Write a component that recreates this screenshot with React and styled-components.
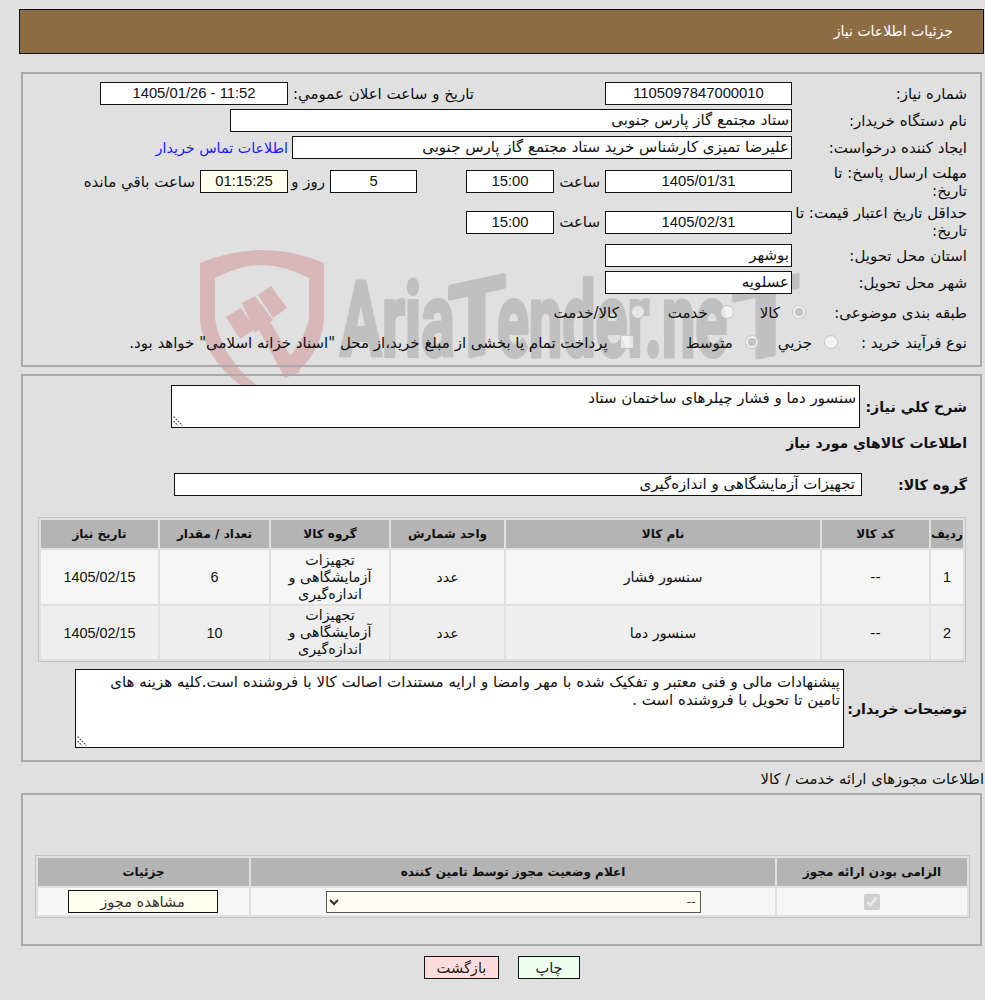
import React from "react";
import styled, { createGlobalStyle } from "styled-components";

const arabic = '"DejaVu Sans", sans-serif';
const latin = '"Liberation Sans", "DejaVu Sans", sans-serif';

const GlobalStyle = createGlobalStyle`
  html {
    background: #e0e0e0;
  }
  body {
    margin: 0;
    font-family: ${arabic};
    font-size: 15px;
    color: #111;
  }
`;

const Watermark = () => {
  return (
    <MarkLayer viewBox="0 0 620 150" aria-hidden="true">
      <path
        d="M0 13 Q32 0 62 0 Q94 0 124 13 L124 70 Q120 105 93 125 L86 110 Q104 92 109 68 L109 28 Q84 15 62 15 Q40 15 15 28 L15 68 Q20 105 56 135 L40 135 Q2 105 0 68 Z"
        fill="#d8b7b9"
      />
      <g fill="#d8b7b9">
        <polygon points="26,67 41,58 55,79 40,89" />
        <polygon points="42,53 55,46 73,70 55,83" />
        <polygon points="58,45 71,36 87,58 73,68" />
        <polygon points="58,78 69,70 100,122 85,128" />
      </g>
      <MarkText transform="translate(140,106) scale(.6,1)">Aria</MarkText>
      <MarkText transform="translate(248,111) skewY(-12) scale(.9,1)">T</MarkText>
      <MarkText transform="translate(297,106) scale(.57,1)">ender.ne</MarkText>
      <MarkText transform="translate(532,113) skewY(-12) scale(1.05,1)">T</MarkText>
    </MarkLayer>
  );
};

const NoteBox = ({ w, h, value }) => {
  return (
    <NoteWrap $w={w} $h={h}>
      <Note readOnly value={value} />
      <Grip viewBox="0 0 10 10" aria-hidden="true">
        <path d="M0.5 0.5 L9.5 9.5 M0.5 5 L5 9.5" />
      </Grip>
    </NoteWrap>
  );
};

const App = () => {
  return (
    <Page>
      <GlobalStyle />
      <Watermark />
      <TitleBar>جزئیات اطلاعات نیاز</TitleBar>

      <InfoPanel>
        <Row $height={27}>
          <Label>شماره نیاز:</Label>
          <Field $w={187} $num>1105097847000010</Field>
          <Spacer $w={123} />
          <InlineText $w={194} $pad={8}>تاریخ و ساعت اعلان عمومي:</InlineText>
          <Field $w={188} $num>1405/01/26 - 11:52</Field>
        </Row>
        <Row $height={27}>
          <Label>نام دستگاه خریدار:</Label>
          <Field $w={562}>ستاد مجتمع گاز پارس جنوبی</Field>
        </Row>
        <Row $height={27}>
          <Label>ایجاد کننده درخواست:</Label>
          <Field $w={500}>علیرضا تمیزی کارشناس خرید ستاد مجتمع گاز پارس جنوبی</Field>
          <ContactLink href="#">اطلاعات تماس خریدار</ContactLink>
        </Row>
        <Row $height={41}>
          <Label>مهلت ارسال پاسخ: تا<br />تاریخ:</Label>
          <Field $w={187} $num>1405/01/31</Field>
          <InlineText $w={51} $pad={5}>ساعت</InlineText>
          <Field $w={88} $num>15:00</Field>
          <Spacer $w={49} />
          <Field $w={87} $num>5</Field>
          <InlineText $w={42} $pad={5}>روز و</InlineText>
          <Field $w={88} $num $tint>01:15:25</Field>
          <InlineText $pad={5}>ساعت باقي مانده</InlineText>
        </Row>
        <Row $height={40}>
          <Label>حداقل تاریخ اعتبار قیمت: تا<br />تاریخ:</Label>
          <Field $w={187} $num>1405/02/31</Field>
          <InlineText $w={51} $pad={5}>ساعت</InlineText>
          <Field $w={88} $num>15:00</Field>
        </Row>
        <Row $height={27}>
          <Label>استان محل تحویل:</Label>
          <Field $w={187}>بوشهر</Field>
        </Row>
        <Row $height={27}>
          <Label>شهر محل تحویل:</Label>
          <Field $w={187}>عسلویه</Field>
        </Row>
        <Row $height={33}>
          <Label $w={161}>طبقه بندی موضوعی:</Label>
          <Option $gap={26}><Radio checked readOnly disabled name="kind" />کالا</Option>
          <Option $gap={23}><Radio readOnly disabled name="kind" />خدمت</Option>
          <Option><Radio readOnly disabled name="kind" />کالا/خدمت</Option>
        </Row>
        <Row $height={27}>
          <Label $w={129}>نوع فرآیند خرید :</Label>
          <Option $gap={19}><Radio readOnly disabled name="proc" />جزيي</Option>
          <Option $gap={52}><Radio checked readOnly disabled name="proc" />متوسط</Option>
          <Option><Tick readOnly disabled />پرداخت تمام یا بخشی از مبلغ خرید،از محل "اسناد خزانه اسلامی" خواهد بود.</Option>
        </Row>
      </InfoPanel>

      <GoodsPanel>
        <Row $height={43}>
          <BoldLabel $w={107}>شرح کلي نیاز:</BoldLabel>
          <NoteBox w={689} h={43} value="سنسور دما و فشار چیلرهای ساختمان ستاد" />
        </Row>
        <SectionTitle>اطلاعات کالاهاي مورد نیاز</SectionTitle>
        <Row $height={23}>
          <BoldLabel $w={105}>گروه کالا:</BoldLabel>
          <Field $w={688} $pad={6}>تجهیزات آزمایشگاهی و اندازه‌گیری</Field>
        </Row>

        <GoodsTable>
          <colgroup>
            <col width="32" />
            <col width="107" />
            <col width="314" />
            <col width="113" />
            <col width="118" />
            <col width="109" />
            <col width="117" />
          </colgroup>
          <thead>
            <tr>
              <Th>ردیف</Th>
              <Th>کد کالا</Th>
              <Th>نام کالا</Th>
              <Th>واحد شمارش</Th>
              <Th>گروه کالا</Th>
              <Th>تعداد / مقدار</Th>
              <Th>تاریخ نیاز</Th>
            </tr>
          </thead>
          <tbody>
            <tr>
              <Td $num>1</Td>
              <Td>--</Td>
              <Td>سنسور فشار</Td>
              <Td>عدد</Td>
              <GroupCell>تجهیزات آزمایشگاهی و اندازه‌گیری</GroupCell>
              <Td $num>6</Td>
              <Td $num>1405/02/15</Td>
            </tr>
            <tr>
              <Td $num $alt>2</Td>
              <Td $alt>--</Td>
              <Td $alt>سنسور دما</Td>
              <Td $alt>عدد</Td>
              <GroupCell $alt>تجهیزات آزمایشگاهی و اندازه‌گیری</GroupCell>
              <Td $num $alt>10</Td>
              <Td $num $alt>1405/02/15</Td>
            </tr>
          </tbody>
        </GoodsTable>

        <BuyerRow>
          <BoldLabel $w={123}>توضیحات خریدار:</BoldLabel>
          <NoteBox
            w={769}
            h={79}
            value={"پیشنهادات مالی و فنی معتبر و تفکیک شده با مهر وامضا و ارایه مستندات اصالت کالا با فروشنده است.کلیه هزینه های\nتامین تا تحویل با فروشنده است ."}
          />
        </BuyerRow>
      </GoodsPanel>

      <PermitHeading>اطلاعات مجوزهای ارائه خدمت / کالا</PermitHeading>

      <PermitPanel>
        <PermitTable>
          <colgroup>
            <col width="190" />
            <col width="524" />
            <col width="211" />
          </colgroup>
          <thead>
            <tr>
              <Th>الزامی بودن ارائه مجوز</Th>
              <Th>اعلام وضعیت مجوز توسط تامین کننده</Th>
              <Th>جزئیات</Th>
            </tr>
          </thead>
          <tbody>
            <tr>
              <PermitCell><PermitTick checked readOnly disabled /></PermitCell>
              <PermitCell>
                <StatusSelect defaultValue="none">
                  <option value="none">--</option>
                </StatusSelect>
              </PermitCell>
              <PermitCell>
                <ViewButton>مشاهده مجوز</ViewButton>
              </PermitCell>
            </tr>
          </tbody>
        </PermitTable>
      </PermitPanel>

      <Actions>
        <ActionButton $bg="#efffef">چاپ</ActionButton>
        <ActionButton $bg="#ffdddd" $wide>بازگشت</ActionButton>
      </Actions>
    </Page>
  );
};

export default App;

const Page = styled.div`
  width: 965px;
  padding: 9px 1px 22px 19px;
  direction: rtl;
  position: relative;
`;

const MarkLayer = styled.svg`
  position: absolute;
  left: 200px;
  top: 250px;
  width: 620px;
  height: 150px;
  z-index: -1;
`;

const MarkText = styled.text`
  direction: ltr;
  font-family: Roboto, sans-serif;
  font-weight: 700;
  font-size: 104px;
  fill: #c0c0c0;
  stroke: #c0c0c0;
  stroke-width: 4px;
  stroke-linejoin: round;
`;

const TitleBar = styled.div`
  height: 43px;
  line-height: 43px;
  background: #8c6c42;
  border: 1px solid #111;
  padding-right: 30px;
  color: #fff;
  font-size: 14px;
`;

const Panel = styled.div`
  border: 2px solid #aaa;
  margin: 0 2px;
  box-sizing: border-box;
`;

const InfoPanel = styled(Panel)`
  margin-top: 18px;
  height: 295px;
  padding-top: 6px;
`;

const GoodsPanel = styled(Panel)`
  margin-top: 7px;
  height: 388px;
  padding-top: 9px;
`;

const PermitPanel = styled(Panel)`
  height: 153px;
  padding-top: 60px;
`;

const Row = styled.div`
  display: flex;
  align-items: center;
  height: ${(p) => p.$height}px;
  padding-right: 13px;
`;

const Label = styled.div`
  width: ${(p) => p.$w || 175}px;
  flex: none;
  line-height: 18px;
  white-space: nowrap;
`;

const BoldLabel = styled.div`
  width: ${(p) => p.$w}px;
  flex: none;
  font-weight: 700;
  font-size: 14.2px;
`;

const SectionTitle = styled.div`
  font-weight: 700;
  font-size: 14px;
  height: 30px;
  line-height: 30px;
  padding-right: 13px;
  margin: 0 0 15px;
`;

const Field = styled.div`
  width: ${(p) => p.$w}px;
  height: 23px;
  flex: none;
  box-sizing: border-box;
  border: 1px solid #111;
  background: ${(p) => (p.$tint ? "#ffffee" : "#fff")};
  padding: 0 ${(p) => p.$pad || 2}px;
  line-height: 21px;
  white-space: nowrap;
  overflow: hidden;
  direction: ${(p) => (p.$num ? "ltr" : "rtl")};
  text-align: ${(p) => (p.$num ? "center" : "right")};
  font-family: ${(p) => (p.$num ? latin : arabic)};
  font-size: ${(p) => (p.$num ? "14.8px" : "15px")};
`;

const InlineText = styled.div`
  ${(p) => (p.$w ? `width: ${p.$w}px;` : "")}
  flex: none;
  padding: 0 ${(p) => p.$pad}px;
  box-sizing: border-box;
  white-space: nowrap;
`;

const Spacer = styled.div`
  width: ${(p) => p.$w}px;
  flex: none;
`;

const ContactLink = styled.a`
  color: #1a1aff;
  font-size: 14.3px;
  text-decoration: none;
  margin-right: 4px;
  white-space: nowrap;
`;

const Option = styled.label`
  display: flex;
  align-items: center;
  gap: 12px;
  margin-left: ${(p) => p.$gap || 0}px;
  white-space: nowrap;
`;

const Radio = styled.input.attrs({ type: "radio" })`
  appearance: none;
  width: 14px;
  height: 14px;
  margin: 0 0 2px;
  flex: none;
  border-radius: 50%;
  border: 1px solid rgba(150, 150, 150, 0.45);
  background: ${(p) =>
    p.checked
      ? "radial-gradient(circle, #c4c4c4 0 4px, rgba(255,255,255,0.6) 4.5px)"
      : "rgba(255,255,255,0.6)"};
`;

const Tick = styled.input.attrs({ type: "checkbox" })`
  appearance: none;
  width: 14px;
  height: 14px;
  margin: 0 0 2px;
  flex: none;
  border-radius: 2px;
  border: 1px solid rgba(150, 150, 150, 0.45);
  background: rgba(255, 255, 255, 0.6);
`;

const NoteWrap = styled.div`
  position: relative;
  flex: none;
  width: ${(p) => p.$w}px;
  height: ${(p) => p.$h}px;
`;

const Note = styled.textarea`
  display: block;
  width: 100%;
  height: 100%;
  box-sizing: border-box;
  border: 1px solid #111;
  border-radius: 0;
  outline: none;
  resize: none;
  background: #fff;
  padding: 3px 3px 0 2px;
  margin: 0;
  font-family: ${arabic};
  font-size: 15px;
  line-height: 18px;
  color: #111;
  direction: rtl;
  overflow: hidden;
`;

const Grip = styled.svg`
  position: absolute;
  left: 2px;
  bottom: 2px;
  width: 10px;
  height: 10px;
  fill: none;
  stroke: #666;
  stroke-width: 1.3;
  stroke-dasharray: 2 1;
`;

const GoodsTable = styled.table`
  width: 928px;
  margin: 21px 14px 0 0;
  table-layout: fixed;
  border-collapse: separate;
  border-spacing: 2px;
  border: 1px solid #c4c4c4;
`;

const Th = styled.th`
  height: 28px;
  padding: 0;
  background: #b4b4b4;
  font-size: 12px;
  font-weight: 700;
  text-align: center;
`;

const Td = styled.td`
  height: ${(p) => (p.$alt ? 53 : 54)}px;
  padding: 0;
  text-align: center;
  background: ${(p) => (p.$alt ? "#eeeeee" : "#f6f6f6")};
  font-family: ${(p) => (p.$num ? latin : arabic)};
  font-size: ${(p) => (p.$num ? "14.4px" : "14.3px")};
`;

const GroupCell = styled(Td)`
  padding: 0 10px;
  line-height: 17px;
`;

const BuyerRow = styled.div`
  display: flex;
  align-items: center;
  padding-right: 13px;
  margin-top: 7px;
`;

const PermitHeading = styled.div`
  margin: 8px 0 5px;
  height: 18px;
  line-height: 18px;
  font-size: 14.8px;
  white-space: nowrap;
`;

const PermitTable = styled.table`
  width: 933px;
  margin-right: 10px;
  table-layout: fixed;
  border-collapse: separate;
  border-spacing: 2px;
  border: 1px solid #c4c4c4;
`;

const PermitCell = styled.td`
  height: 27px;
  padding: 0;
  text-align: center;
  background: #f6f6f6;
`;

const PermitTick = styled.input.attrs({ type: "checkbox" })`
  margin: 0;
  width: 16px;
  height: 16px;
  vertical-align: middle;
`;

const StatusSelect = styled.select`
  width: 375px;
  height: 22px;
  box-sizing: border-box;
  background: #fdfdf2;
  border: 1px solid #555;
  border-radius: 0;
  font-family: ${arabic};
  font-size: 12px;
  color: #333;
  direction: rtl;
  vertical-align: middle;
`;

const ViewButton = styled.button`
  width: 150px;
  height: 23px;
  padding: 0;
  margin-right: 2px;
  box-sizing: border-box;
  border: 1px solid #111;
  background: #ffffee;
  color: #333;
  font-family: ${arabic};
  font-size: 14.6px;
  vertical-align: middle;
`;

const Actions = styled.div`
  display: flex;
  gap: 19px;
  margin-top: 10px;
  padding-right: 404px;
`;

const ActionButton = styled.button`
  width: ${(p) => (p.$wide ? 75 : 62)}px;
  height: 23px;
  padding: 0;
  box-sizing: border-box;
  border: 1px solid #111;
  background: ${(p) => p.$bg};
  color: #222;
  font-family: ${arabic};
  font-size: 14.6px;
`;
